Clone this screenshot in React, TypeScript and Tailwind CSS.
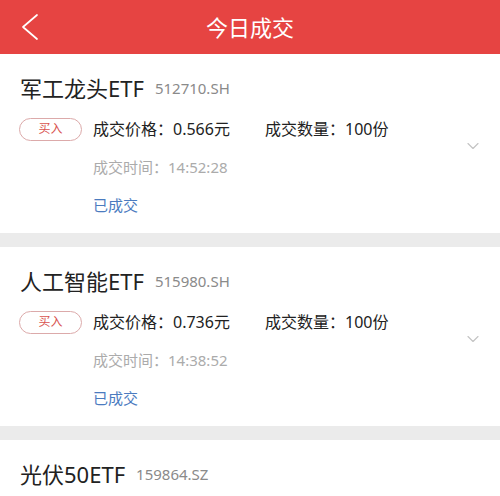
import { ChevronDown } from "lucide-react";

type Deal = {
  name: string
  code: string
  price: string
  qty: string
  time: string
}

const deals: Deal[] = [
  { name: '军工龙头ETF', code: '512710.SH', price: '0.566', qty: '100', time: '14:52:28' },
  { name: '人工智能ETF', code: '515980.SH', price: '0.736', qty: '100', time: '14:38:52' },
  { name: '光伏50ETF', code: '159864.SZ', price: '0.812', qty: '100', time: '14:21:07' },
]

function DealCard({ deal }: { deal: Deal }) {
  return (
    <div className="relative bg-white pt-[20px] pb-[16px]">
      <div className="flex h-[28px] items-center pl-[20px]">
        <span className="text-[22px] leading-none text-[#222]">{deal.name}</span>
        <span className="ml-[11px] text-[15px] leading-none text-[#8a8a8a]">{deal.code}</span>
      </div>
      <div className="mt-[15px] flex h-[24px] items-center">
        <div className="ml-[19px] flex h-[23px] w-[63px] items-center justify-center rounded-full border border-[#dcaaaa] text-[12px] text-[#d9534f]">
          买入
        </div>
        <span className="ml-[11px] w-[172px] text-[16px] text-[#222]">成交价格：{deal.price}元</span>
        <span className="text-[16px] text-[#222]">成交数量：{deal.qty}份</span>
      </div>
      <div className="mt-[14px] flex h-[24px] items-center pl-[93px] text-[15px] text-[#ababab]">
        成交时间：{deal.time}
      </div>
      <div className="mt-[14px] flex h-[24px] items-center pl-[93px] text-[15px] text-[#4b7bbf]">
        已成交
      </div>
      <ChevronDown className="absolute right-[17px] top-[82px] h-[20px] w-[20px] text-[#c4c4c4]" strokeWidth={1.4} />
    </div>
  )
}

export default function App() {
  return (
    <div className="h-[496px] w-[500px] overflow-hidden bg-[#ebebeb]" style={{ fontFamily: '"Noto Sans", "Noto Sans CJK SC", sans-serif' }}>
      <div className="relative flex h-[54px] items-center justify-center bg-[#e64442]">
        <svg className="absolute left-[20px] top-[13px]" width="20" height="28" viewBox="0 0 20 28" fill="none">
          <polyline points="17,2 3,14 17,26" stroke="white" strokeWidth="1.7" strokeLinecap="round" strokeLinejoin="round" />
        </svg>
        <span className="text-[22px] text-white">今日成交</span>
      </div>
      <div className="flex flex-col gap-[14px]">
        {deals.map((deal, index) => (
          <DealCard key={index} deal={deal} />
        ))}
      </div>
    </div>
  )
}
